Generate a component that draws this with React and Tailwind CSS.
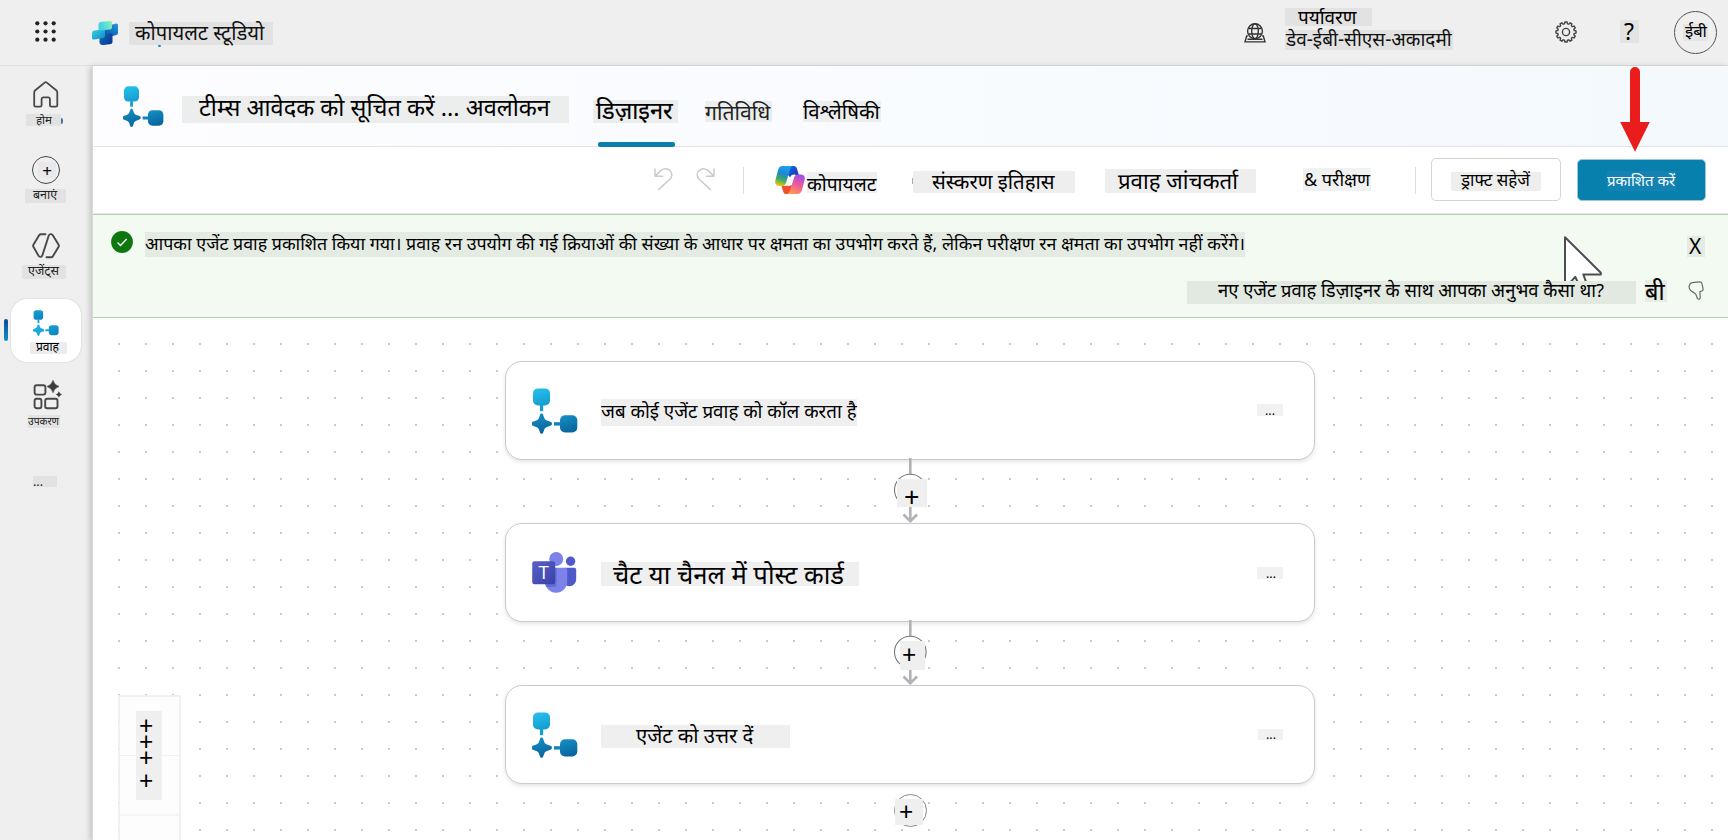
import { useId } from 'react';

/* Text on a tinted plate. `box` sizes the plate, `text` places and sizes the words. */
function Tag({ box, text, children }) {
  return (
    <div className={`flex shrink-0 items-start ${box}`}>
      <span className={`block whitespace-nowrap leading-none ${text}`}>{children}</span>
    </div>
  );
}

function FlowIcon({ className, flat }) {
  const id = useId();
  return (
    <svg viewBox="0 0 46 46" className={className}>
      <defs>
        <linearGradient id={`${id}a`} x1="0" y1="0" x2="0.3" y2="1">
          <stop offset="0" stopColor={flat ? '#169fd6' : '#25c3ee'} />
          <stop offset="1" stopColor={flat ? '#0f86c2' : '#189fd2'} />
        </linearGradient>
        <linearGradient id={`${id}b`} x1="0" y1="0" x2="0.3" y2="1">
          <stop offset="0" stopColor={flat ? '#1fb4de' : '#1592c6'} />
          <stop offset="1" stopColor={flat ? '#17a6d6' : '#0a67a0'} />
        </linearGradient>
      </defs>
      <rect x="1" y="0.4" width="17" height="17" rx="5" fill={`url(#${id}a)`} />
      <rect x="8" y="17" width="3.200" height="6.200" fill="#189fd2" />
      <path d="M9.6 25.6c.9 0 1.300.5 1.600 1.300l1 2.800c.5 1.400 1.300 2.200 2.700 2.700l2.900 1.100c1.700.7 2.200 1.200 2.200 2.200s-.5 1.600-2.200 2.200l-2.900 1.100c-1.400.5-2.200 1.300-2.700 2.700l-1 2.800c-.3.9-.8 1.300-1.600 1.300s-1.300-.4-1.600-1.300l-1-2.800c-.5-1.400-1.300-2.200-2.700-2.700l-2.900-1.100c-1.700-.6-2.200-1.200-2.200-2.200s.5-1.500 2.200-2.200l2.900-1.100c1.400-.5 2.200-1.300 2.700-2.700l1-2.800c.3-.8.7-1.300 1.600-1.300z" fill={`url(#${id}b)`} />
      <rect x="22" y="34.200" width="7" height="3.400" fill={flat ? '#139ace' : '#1383ba'} />
      <rect x="28" y="27.200" width="17.300" height="17.300" rx="5" fill={flat ? `url(#${id}a)` : `url(#${id}b)`} />
    </svg>
  );
}

function TeamsIcon() {
  return (
    <svg viewBox="0 0 45 42" className="h-[42px] w-[45px]">
      <defs>
        <linearGradient id="tq" x1="0" y1="0" x2="1" y2="1">
          <stop offset="0" stopColor="#5a62c3" />
          <stop offset="1" stopColor="#3940ab" />
        </linearGradient>
      </defs>
      <circle cx="38.600" cy="9.200" r="4.700" fill="#5059c9" />
      <path d="M33 15.800h9.200c1.100 0 2 .9 2 2V27c0 4-3 7.200-6.800 7.200-1.700 0-3.200-.6-4.400-1.600z" fill="#5059c9" />
      <circle cx="24.200" cy="7" r="7" fill="#7b83eb" />
      <path d="M13 15.800h20.200c1.100 0 2 .9 2 2v11.700c0 6.200-4.900 11.300-11.100 11.300S13 35.700 13 29.500z" fill="#7b83eb" />
      <path d="M13 15.800h11.500v17.500c0 1-.8 1.700-1.700 1.700H14.500c-1-1.700-1.500-3.500-1.500-5.500z" fill="#4a51b0" opacity="0.450" />
      <rect x="0.200" y="9.200" width="23" height="23" rx="2.200" fill="url(#tq)" />
      <text x="11.700" y="27.300" textAnchor="middle" fontFamily="Open Sans, sans-serif" fontSize="19" fill="#fff">T</text>
    </svg>
  );
}

function CopilotIcon() {
  return (
    <svg viewBox="0 0 30 28" className="h-7 w-[30px]">
      <defs>
        <linearGradient id="cl" x1="0.600" y1="0" x2="0.300" y2="1">
          <stop offset="0" stopColor="#1aa3ee" />
          <stop offset="0.400" stopColor="#1f86cf" />
          <stop offset="0.700" stopColor="#3fab62" />
          <stop offset="1" stopColor="#efc60f" />
        </linearGradient>
        <linearGradient id="cr" x1="0.700" y1="0" x2="0.300" y2="1">
          <stop offset="0" stopColor="#a44be8" />
          <stop offset="0.500" stopColor="#ee5a9a" />
          <stop offset="1" stopColor="#ff9a52" />
        </linearGradient>
        <linearGradient id="cb" x1="0" y1="0" x2="1" y2="1">
          <stop offset="0" stopColor="#1a66dd" />
          <stop offset="1" stopColor="#1534b6" />
        </linearGradient>
      </defs>
      <path d="M14 0h4.600c1.800 0 2.800 1 3.300 2.500l2 6.500h-4c-2.200 0-3.400 1.200-4 3.200L13 9z" fill="url(#cb)" />
      <path d="M16 28h-4.600c-1.800 0-2.700-1-3.200-2.600L6.600 20h3.600c2 0 3-1.200 3.600-3.200l4.200 4z" fill="#f0502c" />
      <path d="M7.600 0h10.600c-1.700.3-2.500 1.500-3.100 3.400l-4.200 13.500c-.6 1.900-1.800 3.100-3.900 3.100H4.200C1 20-.5 17.600.4 14.200L3.100 3.800C3.700 1.400 5.200 0 7.600 0z" fill="url(#cl)" />
      <path d="M22.400 28H11.800c1.700-.3 2.500-1.500 3.100-3.400l4.200-13.200c.6-1.900 1.800-2.900 3.900-2.900h2.800c3.200 0 4.700 2.200 3.800 5.600l-2.700 10.100c-.6 2.400-2.100 3.800-4.500 3.800z" fill="url(#cr)" />
      <path d="M15.500 10.500q.8-1.800 3.500-2h1.500q-1.200.8-1.800 2.900l-2.200 6.800q-.8 1.800-3.500 1.900h-1.500q1.200-.8 1.800-2.900z" fill="#fff" />
    </svg>
  );
}

function StudioLogo() {
  return (
    <svg viewBox="0 0 26 24" className="h-6 w-[26px]">
      <defs>
        <linearGradient id="s1" x1="0" y1="0.300" x2="1" y2="0"><stop offset="0" stopColor="#3fd0e4" /><stop offset="1" stopColor="#8df0b4" /></linearGradient>
        <linearGradient id="s2" x1="0" y1="0" x2="1" y2="1"><stop offset="0" stopColor="#35d3ea" /><stop offset="1" stopColor="#1189c0" /></linearGradient>
        <linearGradient id="s3" x1="0.800" y1="0" x2="0.200" y2="1"><stop offset="0" stopColor="#1f95d8" /><stop offset="1" stopColor="#0a4fa6" /></linearGradient>
        <linearGradient id="s4" x1="0" y1="0" x2="1" y2="0.600"><stop offset="0" stopColor="#0f6cc0" /><stop offset="1" stopColor="#093a94" /></linearGradient>
      </defs>
      <path d="M12 5.500 24.500 2.500q1.500 0 1.500 1.500v8q0 1.500-1.500 2l-12.500 3z" fill="url(#s3)" />
      <path d="M7.500 14.500 20.500 12v9q0 1.500-1.500 2l-7 1q-4.500.4-4.500-3z" fill="url(#s4)" />
      <path d="M2.500 9.500 13 8v7q0 1.700-1.500 2L2 18.500q-2 .2-2-1.500v-5q0-2.200 2.500-2.500z" fill="url(#s2)" />
      <path d="M9 .8 18.500 0q1.500 0 1.500 1.500v5q0 1.500-1.500 2L8 9.500q-1.500 0-1.500-1.500V3.500Q6.500 1 9 .8z" fill="url(#s1)" />
    </svg>
  );
}

function Waffle() {
  return (
    <svg viewBox="0 0 22 22" className="h-[22px] w-[22px]" fill="#222">
      {[2.300, 10.500, 18.700].map((y) => [2.300, 10.500, 18.700].map((x) => <circle key={`${x}-${y}`} cx={x} cy={y} r="2.100" />))}
    </svg>
  );
}

const TEETH = 12;
const gearPath =
  Array.from({ length: TEETH }, (_, i) => {
    const step = (2 * Math.PI) / TEETH;
    return [[-0.34, 8.3], [-0.2, 10.1], [0.2, 10.1], [0.34, 8.3]]
      .map(([k, r], j) => {
        const a = (i + k) * step;
        return `${i === 0 && j === 0 ? 'M' : 'L'}${(11 + r * Math.sin(a)).toFixed(2)} ${(11 - r * Math.cos(a)).toFixed(2)}`;
      })
      .join(' ');
  }).join(' ') + 'Z';

function Gear() {
  return (
    <svg viewBox="0 0 22 22" className="h-[22px] w-[22px]" fill="none" stroke="#444" strokeWidth="1.400" strokeLinejoin="round">
      <path d={gearPath} />
      <circle cx="11" cy="11" r="3.600" />
    </svg>
  );
}

function GlobeDesk() {
  return (
    <svg viewBox="0 0 22 20" className="h-5 w-[22px]" fill="none" stroke="#333" strokeWidth="1.400">
      <path d="M3.800 13H2.700L1 18.900h20L19.300 13h-1.100M3.500 16.300h15" />
      <circle cx="11" cy="8.200" r="7.400" />
      <ellipse cx="11" cy="8.200" rx="3.300" ry="7.400" />
      <path d="M4.200 5.500h13.600M4.200 11h13.600" />
    </svg>
  );
}

function HomeIcon() {
  return (
    <svg viewBox="0 0 26 27" className="h-[27px] w-[26px]" fill="none" stroke="#484848" strokeWidth="1.800" strokeLinejoin="round">
      <path d="M11.700 1.600 2.300 9.300c-.7.600-1.100 1.200-1.100 2.200v12.700c0 .9.600 1.500 1.500 1.500h4.400c.9 0 1.500-.6 1.500-1.500v-6.300c0-1 .6-1.600 1.500-1.600h5.300c.9 0 1.500.6 1.500 1.600v6.300c0 .9.600 1.500 1.500 1.500h4.400c.9 0 1.500-.6 1.500-1.500V11.500c0-1-.4-1.600-1.100-2.200l-9.400-7.700c-.8-.6-1.400-.6-2.200 0z" />
    </svg>
  );
}

function AgentsIcon() {
  return (
    <svg viewBox="0 0 28 26" className="h-[26px] w-7" fill="none" stroke="#484848" strokeWidth="1.900" strokeLinejoin="round" strokeLinecap="round">
      <path d="M13.500 1.200H9c-.9 0-1.400.3-1.900 1L1.400 11.700c-.4.700-.4 1.300 0 2l5.200 9.200c.7 1.200 3.100 1.500 3.800-.7L16.600 3c.7-2.200 3.200-2.400 4.200-.8l5.800 9.500c.4.700.4 1.300 0 2l-5.700 9.500c-.5.800-1 1.100-1.900 1.100h-4.500" />
    </svg>
  );
}

function ToolsIcon() {
  return (
    <svg viewBox="0 0 30 30" className="h-[30px] w-[30px]" fill="none" stroke="#484848" strokeWidth="1.900">
      <rect x="1.600" y="5.200" width="10.800" height="9.400" rx="2" />
      <rect x="1.600" y="18.800" width="6.800" height="9.400" rx="2" />
      <rect x="12.200" y="18.800" width="12.300" height="9.400" rx="2" />
      <path d="M20 .3q1.200 4.800 6 6.200-4.800 1.400-6 6.200-1.200-4.800-6-6.200 4.800-1.400 6-6.200z" fill="#3c3c3c" stroke="#3c3c3c" strokeWidth="0.600" />
      <path d="M25.900 11.300q.6 2.400 3 3.100-2.400.7-3 3.100-.6-2.400-3-3.100 2.400-.7 3-3.100z" fill="#3c3c3c" stroke="none" />
    </svg>
  );
}

function UndoIcon({ className }) {
  return (
    <svg viewBox="0 0 19 23" className={className} fill="none" stroke="#cbcbcb" strokeWidth="1.500" strokeLinecap="round" strokeLinejoin="round">
      <path d="M1 1v7.300h7.600M1.200 8.100 6.500 2.900c2.800-2.800 6.800-2.800 9.300-.4 2.700 2.600 2.700 6.200 0 8.800L4.500 21.600" />
    </svg>
  );
}

function Header() {
  return (
    <header className="flex h-[66px] shrink-0 items-start border-b border-[#e0e0e0] bg-[#efefef]">
      <div className="ml-[35px] mt-[21px]"><Waffle /></div>
      <div className="ml-[35px] mt-[20.500px]"><StudioLogo /></div>
      <div className="ml-[11px] mt-[22px] flex flex-col">
        <Tag box="h-[23px] w-36 bg-[#e2e2e2]" text="pl-[6px] text-[20.200px] text-[#111]">कोपायलट स्टूडियो</Tag>
        <div className="ml-[29px] h-[2px] w-[3px] rounded-full bg-[#2a86b8]" />
      </div>
      <div className="ml-auto mt-[23px] mr-[19px]"><GlobeDesk /></div>
      <div className="mt-2 flex w-[168px] flex-col gap-1">
        <Tag box="h-[18px] w-[87px] bg-[#e2e2e2]" text="pl-[13px] text-[18.900px]">पर्यावरण</Tag>
        <Tag box="h-5 w-[168px] bg-[#e2e2e2]" text="-mt-[0.500px] pl-px text-[19px] text-[#111]">डेव-ईबी-सीएस-अकादमी</Tag>
      </div>
      <div className="ml-[102px] mt-[21px]"><Gear /></div>
      <Tag box="ml-[43px] mt-5 h-[23px] w-[19px] bg-[#e2e3e2]" text="pl-[4px] text-[23px]">?</Tag>
      <div className="ml-[35px] mr-[11px] mt-[11px] flex h-[43px] w-[43px] justify-center rounded-full border border-[#555] pt-3">
        <Tag box="h-[17px] w-[25px] bg-[#e4e5e4]" text="-mt-px pl-[2px] text-[16.600px]">ईबी</Tag>
      </div>
    </header>
  );
}

function Sidebar() {
  return (
    <nav className="flex w-[92px] shrink-0 flex-col bg-[#efefef] text-[#222]">
      <div className="mt-[15px] flex h-[80px] flex-col">
        <div className="ml-[33px]"><HomeIcon /></div>
        <div className="ml-[26px] mt-[6px] flex items-center">
          <Tag box="h-3 w-[35px] bg-[#e2e2e2]" text="pl-[10px] text-[11.500px]">होम</Tag>
          <div className="mt-px h-[6px] w-[2px] rounded-r-full bg-[#3f77ad]" />
        </div>
      </div>
      <div className="-mt-[5px] flex h-[77px] flex-col">
        <div className="ml-8 flex h-[28px] w-[28px] items-center justify-center rounded-full border-[1.700px] border-[#484848]">
          <div className="ml-0.5 flex h-4 w-[18px] shrink-0 items-center justify-center bg-[#e9e9e9] text-[17px] leading-none text-black">+</div>
        </div>
        <Tag box="ml-[25px] mt-[5px] h-[14px] w-[41px] bg-[#e2e2e2]" text="pl-[8px] text-[12.400px]">बनाएं</Tag>
      </div>
      <div className="flex h-[65px] flex-col">
        <div className="ml-8"><AgentsIcon /></div>
        <Tag box="ml-[22px] mt-[6px] h-[14px] w-[44px] bg-[#e2e2e2]" text="pl-[6px] text-[12.500px]">एजेंट्स</Tag>
      </div>
      <div className="flex h-16 items-center">
        <div className="ml-1 h-[22px] w-1 rounded-full bg-linear-to-b from-[#0c4a94] to-[#1590c8]" />
        <div className="ml-[3px] flex h-[63px] w-[70px] flex-col rounded-[16px] bg-white shadow-[0_0_2px_rgba(0,0,0,0.180)]">
          <FlowIcon flat className="ml-[22px] mt-[11px] h-[26px] w-[26px]" />
          <Tag box="ml-[19px] mt-[6px] h-3 w-[37px] bg-[#ececec]" text="-mt-px pl-[6px] text-[12px] text-black">प्रवाह</Tag>
        </div>
      </div>
      <div className="ml-[33px] mt-[18px]"><ToolsIcon /></div>
      <Tag box="ml-[28px] mt-[5px] h-[13px] w-8 bg-[#e2e2e2]" text="mt-px text-[10.300px]">उपकरण</Tag>
      <Tag box="ml-[33px] mt-12 h-[11px] w-6 bg-[#e2e2e2]" text="text-[12.400px]">...</Tag>
    </nav>
  );
}

function TitleBar() {
  return (
    <div className="flex h-[81px] shrink-0 items-start border-b border-[#e3e4e6] bg-linear-to-r from-[#fdfdff] to-[#f4f9fd]">
      <FlowIcon className="ml-[30px] mt-5 h-[41px] w-[41px]" />
      <Tag box="ml-[18px] mt-[30px] h-[27px] w-[387px] bg-[#eceded]" text="pl-[17px] text-[23.500px]">टीम्स आवेदक को सूचित करें ... अवलोकन</Tag>
      <div className="ml-6 mt-[34px] flex h-[47px] w-[85px] flex-col">
        <Tag box="h-[23px] w-[85px] bg-[#eceded]" text="-mt-px pl-[3px] text-[23.600px] [-webkit-text-stroke:0.150px]">डिज़ाइनर</Tag>
        <div className="ml-[5px] mt-[19px] h-[5px] w-[77px] rounded-[2px] bg-[#0a7fae]" />
      </div>
      <Tag box="ml-[27px] mt-[35px] h-[21px] w-[67px] bg-[#eceded]" text="text-[21.200px] text-[#222]">गतिविधि</Tag>
      <Tag box="ml-[31px] mt-[35px] h-[21px] w-[78px] bg-[#eceded]" text="text-[20.400px]">विश्लेषिकी</Tag>
    </div>
  );
}

function Toolbar() {
  return (
    <div className="flex h-[67px] shrink-0 items-start border-b border-[#e6e6e6] bg-white">
      <UndoIcon className="ml-[561px] mt-[21px] h-[23px] w-[19px]" />
      <UndoIcon className="ml-[23px] mt-[21px] h-[23px] w-[19px] -scale-x-100" />
      <div className="ml-[28px] mt-5 h-[27px] w-px bg-[#dedede]" />
      <div className="ml-[31px] mt-[19px]"><CopilotIcon /></div>
      <Tag box="ml-[2px] mt-[25px] h-[21px] w-[70px] bg-[#efefef]" text="mt-[2px] text-[19.200px]">कोपायलट</Tag>
      <div className="ml-[35px] mt-[31px] h-[6px] w-px bg-[#aaa]" />
      <Tag box="mt-[23.500px] h-[22px] w-[162px] bg-[#eeeeee]" text="pl-[19px] text-[20.400px]">संस्करण इतिहास</Tag>
      <Tag box="ml-[30px] mt-[22px] h-6 w-[151px] bg-[#eeeeee]" text="pl-[13px] pt-px text-[22.200px]">प्रवाह जांचकर्ता</Tag>
      <Tag box="ml-[47px] mt-[21px] h-[23px] w-[68px] bg-[#f0f1f1]" text="mt-[2px] pl-px text-[18px]">&amp; परीक्षण</Tag>
      <div className="ml-[44px] mt-5 h-[27px] w-px bg-[#dedede]" />
      <button className="ml-[15px] mt-[11px] flex h-[43px] w-[130px] justify-center rounded-[5px] border border-[#d3d3d3] bg-white pt-[13px]">
        <Tag box="h-[19px] w-[90px] bg-[#eeeeed]" text="-mt-px pl-[10px] text-[17px]">ड्राफ्ट सहेजें</Tag>
      </button>
      <button className="ml-[16px] mt-[12px] flex h-[42px] w-[129px] justify-center rounded-[5px] border border-[#9dc6d8] bg-[#0880ae] pt-[11px]">
        <Tag box="h-5 w-[69px] bg-[#1583b2]" text="mt-[2px] text-[15px] text-white">प्रकाशित करें</Tag>
      </button>
    </div>
  );
}

function Banner() {
  return (
    <div className="flex h-[104px] shrink-0 items-start border-y border-[#a9dba9] bg-[#f2faf2]">
      <svg viewBox="0 0 22 22" className="ml-[18px] mt-4 h-[22px] w-[22px]">
        <circle cx="11" cy="11" r="10.900" fill="#107610" />
        <path d="m6.500 11.500 3 3 6.200-6.500" fill="none" stroke="#fff" strokeWidth="1.300" />
      </svg>
      <Tag box="ml-3 mt-[17px] h-[25px] w-[1100px] bg-[#e4ebe3]" text="mt-[3px] text-[17.830px]">
        आपका एजेंट प्रवाह प्रकाशित किया गया। प्रवाह रन उपयोग की गई क्रियाओं की संख्या के आधार पर क्षमता का उपभोग करते हैं, लेकिन परीक्षण रन क्षमता का उपभोग नहीं करेंगे।
      </Tag>
      <div className="ml-auto mr-[24px] mt-[21px] flex flex-col items-end gap-[25px]">
        <Tag box="-mr-px h-[21px] w-[18px] bg-[#e4ebe3]" text="pl-[2px] text-[21px]">X</Tag>
        <div className="-ml-[400px] flex items-start">
          <Tag box="-mt-px h-[23px] w-[449px] bg-[#e2e9e1]" text="pl-[31px] text-[18.400px]">नए एजेंट प्रवाह डिज़ाइनर के साथ आपका अनुभव कैसा था?</Tag>
          <Tag box="ml-[9px] -mt-[2px] h-[22px] w-[22px] bg-[#e6ede5]" text="text-[23.500px] [-webkit-text-stroke:0.150px]">बी</Tag>
          <svg viewBox="0 0 16 20" className="-mt-px ml-[21px] h-5 w-4" fill="none" stroke="#6a6a6a" strokeWidth="1.200" strokeLinejoin="round">
            <path d="M4.300 1.600 11.400.9c1.300-.1 2.300.6 2.600 1.900l1 4.600c.3 1.300-.4 2.500-1.700 2.900l-1.400.4.300 5.800c.1 1.600-1.600 2.300-2.600 1.200-.9-1.300-.8-3-2-4.600-1.200-1.500-3.500-2.200-4.900-3.600C1.100 8 .8 6.300 1.300 4.500c.4-1.600 1.400-2.700 3-2.900z" />
          </svg>
        </div>
      </div>
    </div>
  );
}

function Card({ icon, children, more }) {
  return (
    <div className="flex h-[99px] w-[810px] shrink-0 items-start rounded-[17px] border border-[#cbcbcd] bg-white shadow-[0_2px_4px_rgba(0,0,0,0.110)]">
      <div className="ml-[26px] mt-[26px] w-[46px]">{icon}</div>
      {children}
      {more}
    </div>
  );
}

function Connector({ plate }) {
  return (
    <div className="relative h-[63px] w-[34px] shrink-0">
      <svg viewBox="0 0 34 63" className="h-[63px] w-[34px] overflow-visible" fill="none">
        <path d="M17.300-2v64M10.500 54.500l6.800 6.600 6.800-6.600" stroke="#b1b1b7" strokeWidth="2.600" />
        <circle cx="17.300" cy="30" r="15.800" fill="#fff" stroke="#777" strokeWidth="1.100" />
      </svg>
      <div className={`absolute flex items-start bg-[#efefef] ${plate}`}>
        <span className="block leading-none">+</span>
      </div>
    </div>
  );
}

function ZoomPanel() {
  return (
    <div className="absolute bottom-0 left-[25px] flex h-[145px] w-[63px] flex-col border-2 border-b-0 border-[#f0f0f0]/90 bg-[#fdfdfd] bg-clip-padding">
      <div className="h-[59px] border-b border-[#f1f1f1]" />
      <div className="h-[60px] border-b-2 border-[#f5f5f5]" />
      <div className="absolute left-4 top-[14px] flex h-[89px] w-[26px] flex-col bg-[#efefef] pl-[3px] pt-[7px] text-[25px]">
        <span className="block h-4 leading-[14px]">+</span>
        <span className="block h-4 leading-[14px]">+</span>
        <span className="block h-[23px] leading-[14px]">+</span>
        <span className="block h-4 leading-[14px]">+</span>
      </div>
    </div>
  );
}

function Canvas() {
  return (
    <div className="relative flex min-h-0 flex-1 flex-col overflow-hidden bg-white bg-[radial-gradient(circle_at_0.800px_1px,#cacaca_0.900px,transparent_1.100px)] bg-[size:27px_27px] bg-[position:25px_25px] pl-[412px] pt-[43px]">
      <div className="flex w-[810px] flex-col items-center">
        <Card
          icon={<FlowIcon className="h-[46px] w-[46px]" />}
          more={<Tag box="ml-auto mr-[31px] mt-[42px] h-3 w-[26px] bg-[#f1f1f1]" text="pl-[8px] pt-px text-[12.400px]">...</Tag>}
        >
          <Tag box="ml-[23px] mt-[37px] h-[27px] w-64 bg-[#efefef]" text="mt-[3px] text-[18.750px]">जब कोई एजेंट प्रवाह को कॉल करता है</Tag>
        </Card>
        <Connector plate="left-1 top-[19px] h-7 w-[30px] pl-[7px] pt-[4px] text-[27px]" />
        <Card
          icon={<div className="pt-[2px]"><TeamsIcon /></div>}
          more={<Tag box="ml-auto mr-[31px] mt-[43px] h-3 w-[26px] bg-[#f1f1f1]" text="pl-[9px] pt-px text-[12.400px]">...</Tag>}
        >
          <Tag box="ml-[23px] mt-[38px] h-6 w-[258px] bg-[#efefef]" text="pl-[12px] text-[25.600px]">चैट या चैनल में पोस्ट कार्ड</Tag>
        </Card>
        <Connector plate="left-[7px] top-[19px] h-[29px] w-[25px] pl-[2px] pt-px text-[25px]" />
        <Card
          icon={<FlowIcon className="h-[46px] w-[46px]" />}
          more={<Tag box="ml-auto mr-[31px] mt-[43px] h-[11px] w-[25px] bg-[#f1f1f1]" text="pl-[8px] text-[12.400px]">...</Tag>}
        >
          <Tag box="ml-[23px] mt-[39px] h-[23px] w-[189px] bg-[#efefef]" text="pl-[35px] text-[20.300px]">एजेंट को उत्तर दें</Tag>
        </Card>
        <div className="relative ml-px mt-[10px] h-[33px] w-[33px] shrink-0 rounded-full border border-[#888] bg-white">
          <div className="absolute left-0 top-1 flex h-[26px] w-7 items-start bg-[#efefef] pl-1 text-[25px]">
            <span className="block leading-none">+</span>
          </div>
        </div>
      </div>
      <ZoomPanel />
    </div>
  );
}

export default function App() {
  return (
    <div className="relative flex h-[840px] w-[1728px] flex-col overflow-hidden bg-[#efefef] font-['Noto_Sans',sans-serif] text-black">
      <Header />
      <div className="flex min-h-0 flex-1">
        <Sidebar />
        <main className="flex min-w-0 flex-1 flex-col border-l border-[#d9d9d9] shadow-[-2px_1px_6px_rgba(0,0,0,0.200)]">
          <TitleBar />
          <Toolbar />
          <Banner />
          <Canvas />
        </main>
      </div>
      <svg viewBox="0 0 30 86" className="absolute left-[1620px] top-[67px] h-[86px] w-[30px]" fill="#ea1c1c">
        <path d="M10 5a5 5 0 0 1 10 0v50h9.800L15 84.800.2 55H10z" />
      </svg>
      <div className="absolute left-[1563px] top-[235px] h-[46px] w-[40px] overflow-hidden">
        <svg viewBox="0 0 40 60" className="h-[60px] w-[40px]">
          <path d="M2 2.200v51l10.300-11.400 7 15.500 6.500-3-5.500-14.800h17.500v-1.800z" fill="#fff" stroke="#4c4c52" strokeWidth="2" strokeLinejoin="round" />
        </svg>
      </div>
    </div>
  );
}
